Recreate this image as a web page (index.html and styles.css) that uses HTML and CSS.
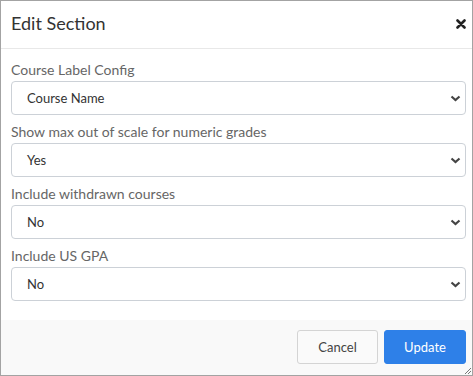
FILE: index.html
```html
<!DOCTYPE html>
<html>

<head>
  <meta name="viewport" content="width=device-width, initial-scale=1" />
  <link rel="stylesheet" href="styles.css">
</head>

<body>
  <div class="modal">
    <div class="modal-header">
      <h4 class="modal-title">Edit Section</h4>
      <button class="close" aria-label="Close">
        <svg width="10" height="10" viewBox="0 0 10 10">
          <path d="M1.5 1.5 L8.5 8.5 M8.5 1.5 L1.5 8.5" stroke="#222" stroke-width="2.6" stroke-linecap="round" />
        </svg>
      </button>
    </div>

    <div class="modal-body">
      <div class="field">
        <label>Course Label Config</label>
        <div class="select">
          <span>Course Name</span>
          <svg class="caret" width="11" height="7" viewBox="0 0 11 7">
            <path d="M1.5 1.5 L5.5 5 L9.5 1.5" fill="none" stroke="#444" stroke-width="2.2" />
          </svg>
        </div>
      </div>
      <div class="field">
        <label>Show max out of scale for numeric grades</label>
        <div class="select">
          <span>Yes</span>
          <svg class="caret" width="11" height="7" viewBox="0 0 11 7">
            <path d="M1.5 1.5 L5.5 5 L9.5 1.5" fill="none" stroke="#444" stroke-width="2.2" />
          </svg>
        </div>
      </div>
      <div class="field">
        <label>Include withdrawn courses</label>
        <div class="select">
          <span>No</span>
          <svg class="caret" width="11" height="7" viewBox="0 0 11 7">
            <path d="M1.5 1.5 L5.5 5 L9.5 1.5" fill="none" stroke="#444" stroke-width="2.2" />
          </svg>
        </div>
      </div>
      <div class="field">
        <label>Include US GPA</label>
        <div class="select">
          <span>No</span>
          <svg class="caret" width="11" height="7" viewBox="0 0 11 7">
            <path d="M1.5 1.5 L5.5 5 L9.5 1.5" fill="none" stroke="#444" stroke-width="2.2" />
          </svg>
        </div>
      </div>
    </div>

    <div class="modal-footer">
      <button class="btn btn-default">Cancel</button>
      <button class="btn btn-primary">Update</button>
    </div>

    <svg class="resize" width="9" height="9" viewBox="0 0 9 9">
      <path d="M8 2 L2 8 M8 5 L5 8" stroke="#777" stroke-width="1" />
    </svg>
  </div>
</body>

</html>
```

FILE: styles.css
```css
* {
  box-sizing: border-box;
}

body {
  margin: 0;
  font-family: Lato, "Open Sans", Arial, sans-serif;
  background: #fff;
}

.modal {
  position: relative;
  width: 473px;
  height: 376px;
  border: 1px solid #a3a3a3;
  background: #fff;
  display: flex;
  flex-direction: column;
}

.modal-header {
  height: 48px;
  border-bottom: 1px solid #e8e8e8;
  display: flex;
  align-items: center;
  justify-content: space-between;
  padding: 0 6px 0 10px;
}

.modal-title {
  margin: 0;
  font-size: 18px;
  font-weight: 400;
  color: #333;
  padding-bottom: 4px;
}

.close {
  background: none;
  border: 0;
  padding: 0;
  width: 10px;
  height: 10px;
  display: flex;
  margin-bottom: 1px;
}

.modal-body {
  flex: 1;
  padding: 10px 6px 0 10px;
}

.field {
  margin-bottom: 6px;
}

.field label {
  display: block;
  font-size: 14px;
  line-height: 22px;
  color: #666;
}

.select {
  height: 34px;
  border: 1px solid #ccd1d7;
  border-radius: 4px;
  display: flex;
  align-items: center;
  justify-content: space-between;
  padding: 0 4px 0 15px;
  font-size: 13px;
  color: #333;
}

.caret {
  display: block;
}

.modal-footer {
  height: 55px;
  background: #f9f9f9;
  display: flex;
  justify-content: flex-end;
  align-items: center;
  gap: 6px;
  padding: 0 6px 1px 0;
}

.btn {
  height: 34px;
  border-radius: 3px;
  font-family: Lato, "Open Sans", Arial, sans-serif;
  font-size: 13px;
  padding: 0;
}

.btn-default {
  width: 81px;
  background: #fafafa;
  border: 1px solid #d4d4d4;
  color: #444;
}

.btn-primary {
  width: 82px;
  background: #2e80e8;
  border: 1px solid #2e80e8;
  color: #fff;
}

.resize {
  position: absolute;
  right: 0;
  bottom: 0;
}
```
